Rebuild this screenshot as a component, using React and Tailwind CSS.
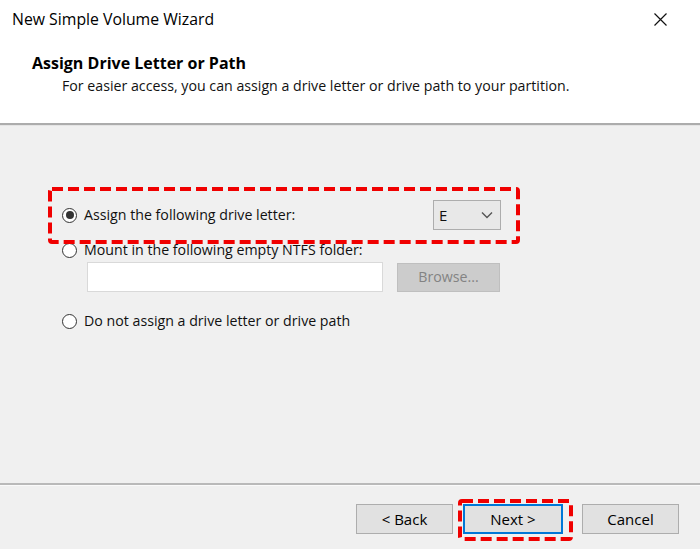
import React from 'react';

const font = { fontFamily: '"Open Sans", "Noto Sans", Arial, sans-serif' };

const Radio = ({ checked }) => (
  <span className="w-[15px] h-[15px] rounded-full border border-[#333] bg-white flex items-center justify-center shrink-0">
    {checked && <span className="w-[8px] h-[8px] rounded-full bg-[#333]" />}
  </span>
);

const DashBox = ({ className, w, h }) => (
  <svg className={`absolute pointer-events-none ${className}`} width={w} height={h}>
    <rect x="2" y="2" width={w - 4} height={h - 4} rx="2" fill="none" stroke="#f00000" strokeWidth="4" strokeDasharray="11 5" />
  </svg>
);

export default function App() {
  return (
    <div className="w-[700px] h-[549px] bg-[#f0f0f0] flex flex-col text-[14.2px] text-[#111] relative overflow-hidden" style={font}>
      {/* header */}
      <div className="bg-white h-[123px] shrink-0">
        <div className="h-[39px] flex items-center justify-between pl-[12px] pr-[33px]">
          <span className="text-[15.8px] text-black">New Simple Volume Wizard</span>
          <svg width="13" height="13" viewBox="0 0 13 13">
            <path d="M0.5 0.5 L12.5 12.5 M12.5 0.5 L0.5 12.5" stroke="#111" strokeWidth="1.2" />
          </svg>
        </div>
        <div className="mt-[14px] pl-[32px] font-bold leading-[20px] text-[16px] text-black">Assign Drive Letter or Path</div>
        <div className="mt-[3px] pl-[62px] leading-[20px]">For easier access, you can assign a drive letter or drive path to your partition.</div>
      </div>
      <div className="h-[2px] bg-[#acacac] shrink-0" />
      <div className="h-[1px] bg-[#e4e4e4] shrink-0" />

      {/* content */}
      <div className="flex-1 pt-[74px] pl-[62px]">
        <div className="flex items-center h-[30px]">
          <Radio checked />
          <span className="ml-[7px] w-[349px]">Assign the following drive letter:</span>
          <div className="w-[68px] h-[30px] bg-[#e8e8e8] border border-[#adadad] flex items-center justify-between pl-[5px] pr-[7px]">
            <span className="text-[15px]">E</span>
            <svg width="12" height="8" viewBox="0 0 12 8">
              <path d="M1 1.5 L6 6.5 L11 1.5" fill="none" stroke="#555" strokeWidth="1.4" />
            </svg>
          </div>
        </div>
        <div className="flex items-center h-[20px] mt-[10px]">
          <Radio />
          <span className="ml-[7px]">Mount in the following empty NTFS folder:</span>
        </div>
        <div className="flex items-center mt-[2px] pl-[25px]">
          <div className="w-[296px] h-[30px] bg-white border border-[#d9d9d9]" />
          <div className="ml-[14px] w-[103px] h-[29px] bg-[#cccccc] border border-[#bfbfbf] flex items-center justify-center text-[#838383]">Browse...</div>
        </div>
        <div className="flex items-center h-[20px] mt-[19px]">
          <Radio />
          <span className="ml-[7px]">Do not assign a drive letter or drive path</span>
        </div>
      </div>

      {/* footer */}
      <div className="h-[2px] bg-[#b9b9b9] shrink-0" />
      <div className="h-[1px] bg-[#fafafa] shrink-0" />
      <div className="h-[63px] shrink-0 flex items-start justify-end pt-[18px] pr-[21px]">
        <button className="w-[97px] h-[30px] bg-[#e1e1e1] border border-[#adadad] text-[15px] text-black">&lt; Back</button>
        <button className="ml-[10px] w-[100px] h-[30px] bg-[#e1e1e1] border-2 border-[#0078d7] text-[15px] text-black">Next &gt;</button>
        <button className="ml-[19px] w-[97px] h-[30px] bg-[#e1e1e1] border border-[#adadad] text-[15px] text-black">Cancel</button>
      </div>

      <DashBox className="left-[48px] top-[187px]" w={472} h={57} />
      <DashBox className="left-[458px] top-[499px]" w={115} h={42} />
    </div>
  );
}
